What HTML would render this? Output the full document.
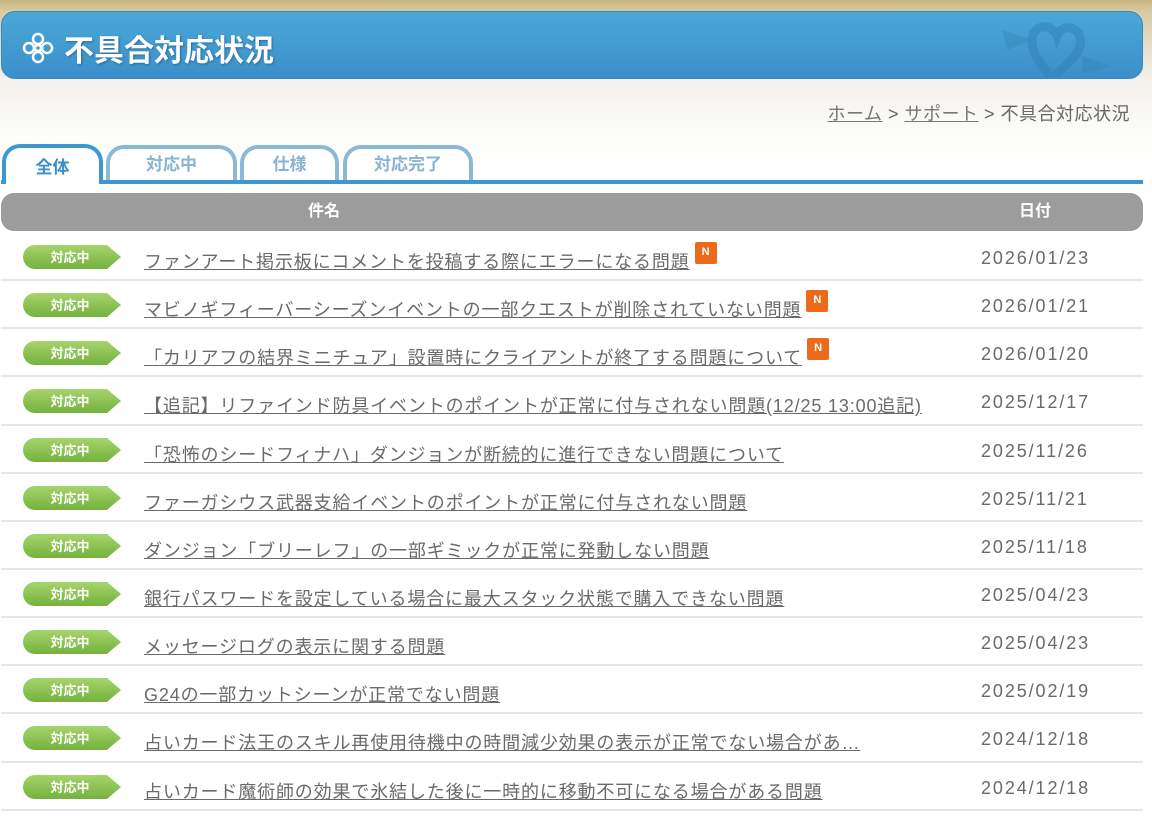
<!DOCTYPE html>
<html><head><meta charset="utf-8"><style>
*{margin:0;padding:0;box-sizing:border-box}
body{width:1152px;height:821px;overflow:hidden;background:#fff;font-family:"Liberation Sans","Noto Sans CJK JP",sans-serif;position:relative}
.bg{position:absolute;left:0;top:0;width:1152px;height:170px;background:linear-gradient(180deg,#c8b480 0,#d8caa4 12px,#f3f1ec 80px,#fbfbf9 130px,#fff 170px)}
.bar{position:absolute;left:1px;top:11px;width:1142px;height:68px;border-radius:14px;background:linear-gradient(180deg,#4aa8d8,#3b8fc9);border:1px solid #3a88bf;overflow:hidden}
.bar h1{position:absolute;left:62px;top:14px;color:#fff;font-size:30px;font-weight:bold;text-shadow:1px 1px 2px #2a6a99}
.knot{position:absolute;left:20px;top:20px;width:32px;height:32px}
.crumb{position:absolute;right:22px;top:100px;font-size:18px;color:#666;letter-spacing:.5px}
.crumb a{color:#777;text-decoration:underline}
.tab{position:absolute;top:145px;height:38px;border:4px solid #8ab9d8;border-bottom:none;border-radius:18px 18px 0 0;background:#fff;color:#8ab3d0;font-size:17px;font-weight:bold;text-align:center;line-height:32px}
.line{position:absolute;left:1px;top:180px;width:1142px;height:4px;background:#3e97cf}
.hdr{position:absolute;left:1px;top:193px;width:1142px;height:38px;background:#9c9c9c;border-radius:13px;color:#fff;font-size:16px;font-weight:bold;line-height:38px}
.rows{position:absolute;left:1px;top:233px;width:1142px}
.row{height:48.15px;border-bottom:2px solid #e6e6e6;position:relative;font-size:18px;color:#6a6a6a}
.badge{position:absolute;left:22px;top:12px;width:98px;height:24px}
.t{position:absolute;left:143px;top:15px;white-space:nowrap;color:#6a6a6a;letter-spacing:.85px}
.t u{text-decoration:underline}
.d{position:absolute;left:980px;top:15px;letter-spacing:1.9px;color:#6a6a6a}
.n{display:inline-block;width:22px;height:22px;background:#ec6a1c;border-radius:2px;color:#fff;font-size:11px;font-weight:bold;text-align:center;line-height:20px;vertical-align:top;margin-left:5px;margin-top:-6px;letter-spacing:0}
</style></head><body>
<div class="bg"></div>
<div class="bar">
<svg class="knot" viewBox="0 0 32 32" fill="none" stroke="#fff" stroke-width="2.5"><circle cx="16" cy="7" r="5"/><circle cx="16" cy="25" r="5"/><circle cx="7" cy="16" r="5"/><circle cx="25" cy="16" r="5"/><circle cx="16" cy="16" r="3"/></svg>
<h1>不具合対応状況</h1>
<svg style="position:absolute;left:1000px;top:4px" width="130" height="70" viewBox="0 0 130 70"><path d="M30 25 C30 8 50 6 55 20 C60 6 82 10 78 30 C74 44 58 52 50 64 C44 52 30 42 30 25Z" fill="none" stroke="#3284ba" stroke-width="9" opacity=".55"/><path d="M0 14 L30 24 L5 34Z M80 40 L110 50 L80 58Z" fill="#3284ba" opacity=".4"/></svg>
</div>
<div class="crumb"><a>ホーム</a> &gt; <a>サポート</a> &gt; 不具合対応状況</div>
<div class="tab" style="left:106px;width:131px">対応中</div>
<div class="tab" style="left:240px;width:99px">仕様</div>
<div class="tab" style="left:343px;width:130px">対応完了</div>
<div class="line"></div>
<div class="tab" style="left:2px;width:101px;color:#3a8fc6;border-color:#3e97cf;top:144px;height:40px;line-height:40px;z-index:2">全体</div>
<div class="hdr"><span style="position:absolute;left:307px">件名</span><span style="position:absolute;left:1018px">日付</span></div>
<div class="rows">
<svg width="0" height="0" style="position:absolute"><defs><linearGradient id="g" x1="0" y1="0" x2="0" y2="1"><stop offset="0" stop-color="#a6d46c"/><stop offset="1" stop-color="#74b23e"/></linearGradient></defs></svg>
<div class="row"><svg class="badge" viewBox="0 0 98 24"><path d="M12 0H84L98 12L84 24H12A12 12 0 0 1 12 0Z" fill="url(#g)"/><text x="47" y="17" font-size="13" fill="#fff" text-anchor="middle" font-weight="bold" font-family="Noto Sans CJK JP">対応中</text></svg><span class="t"><u>ファンアート掲示板にコメントを投稿する際にエラーになる問題</u><span class="n">N</span></span><span class="d">2026/01/23</span></div>
<div class="row"><svg class="badge" viewBox="0 0 98 24"><path d="M12 0H84L98 12L84 24H12A12 12 0 0 1 12 0Z" fill="url(#g)"/><text x="47" y="17" font-size="13" fill="#fff" text-anchor="middle" font-weight="bold" font-family="Noto Sans CJK JP">対応中</text></svg><span class="t"><u>マビノギフィーバーシーズンイベントの一部クエストが削除されていない問題</u><span class="n">N</span></span><span class="d">2026/01/21</span></div>
<div class="row"><svg class="badge" viewBox="0 0 98 24"><path d="M12 0H84L98 12L84 24H12A12 12 0 0 1 12 0Z" fill="url(#g)"/><text x="47" y="17" font-size="13" fill="#fff" text-anchor="middle" font-weight="bold" font-family="Noto Sans CJK JP">対応中</text></svg><span class="t"><u>「カリアフの結界ミニチュア」設置時にクライアントが終了する問題について</u><span class="n">N</span></span><span class="d">2026/01/20</span></div>
<div class="row"><svg class="badge" viewBox="0 0 98 24"><path d="M12 0H84L98 12L84 24H12A12 12 0 0 1 12 0Z" fill="url(#g)"/><text x="47" y="17" font-size="13" fill="#fff" text-anchor="middle" font-weight="bold" font-family="Noto Sans CJK JP">対応中</text></svg><span class="t"><u>【追記】リファインド防具イベントのポイントが正常に付与されない問題(12/25 13:00追記)</u></span><span class="d">2025/12/17</span></div>
<div class="row"><svg class="badge" viewBox="0 0 98 24"><path d="M12 0H84L98 12L84 24H12A12 12 0 0 1 12 0Z" fill="url(#g)"/><text x="47" y="17" font-size="13" fill="#fff" text-anchor="middle" font-weight="bold" font-family="Noto Sans CJK JP">対応中</text></svg><span class="t"><u>「恐怖のシードフィナハ」ダンジョンが断続的に進行できない問題について</u></span><span class="d">2025/11/26</span></div>
<div class="row"><svg class="badge" viewBox="0 0 98 24"><path d="M12 0H84L98 12L84 24H12A12 12 0 0 1 12 0Z" fill="url(#g)"/><text x="47" y="17" font-size="13" fill="#fff" text-anchor="middle" font-weight="bold" font-family="Noto Sans CJK JP">対応中</text></svg><span class="t"><u>ファーガシウス武器支給イベントのポイントが正常に付与されない問題</u></span><span class="d">2025/11/21</span></div>
<div class="row"><svg class="badge" viewBox="0 0 98 24"><path d="M12 0H84L98 12L84 24H12A12 12 0 0 1 12 0Z" fill="url(#g)"/><text x="47" y="17" font-size="13" fill="#fff" text-anchor="middle" font-weight="bold" font-family="Noto Sans CJK JP">対応中</text></svg><span class="t"><u>ダンジョン「ブリーレフ」の一部ギミックが正常に発動しない問題</u></span><span class="d">2025/11/18</span></div>
<div class="row"><svg class="badge" viewBox="0 0 98 24"><path d="M12 0H84L98 12L84 24H12A12 12 0 0 1 12 0Z" fill="url(#g)"/><text x="47" y="17" font-size="13" fill="#fff" text-anchor="middle" font-weight="bold" font-family="Noto Sans CJK JP">対応中</text></svg><span class="t"><u>銀行パスワードを設定している場合に最大スタック状態で購入できない問題</u></span><span class="d">2025/04/23</span></div>
<div class="row"><svg class="badge" viewBox="0 0 98 24"><path d="M12 0H84L98 12L84 24H12A12 12 0 0 1 12 0Z" fill="url(#g)"/><text x="47" y="17" font-size="13" fill="#fff" text-anchor="middle" font-weight="bold" font-family="Noto Sans CJK JP">対応中</text></svg><span class="t"><u>メッセージログの表示に関する問題</u></span><span class="d">2025/04/23</span></div>
<div class="row"><svg class="badge" viewBox="0 0 98 24"><path d="M12 0H84L98 12L84 24H12A12 12 0 0 1 12 0Z" fill="url(#g)"/><text x="47" y="17" font-size="13" fill="#fff" text-anchor="middle" font-weight="bold" font-family="Noto Sans CJK JP">対応中</text></svg><span class="t"><u>G24の一部カットシーンが正常でない問題</u></span><span class="d">2025/02/19</span></div>
<div class="row"><svg class="badge" viewBox="0 0 98 24"><path d="M12 0H84L98 12L84 24H12A12 12 0 0 1 12 0Z" fill="url(#g)"/><text x="47" y="17" font-size="13" fill="#fff" text-anchor="middle" font-weight="bold" font-family="Noto Sans CJK JP">対応中</text></svg><span class="t"><u>占いカード法王のスキル再使用待機中の時間減少効果の表示が正常でない場合があ…</u></span><span class="d">2024/12/18</span></div>
<div class="row"><svg class="badge" viewBox="0 0 98 24"><path d="M12 0H84L98 12L84 24H12A12 12 0 0 1 12 0Z" fill="url(#g)"/><text x="47" y="17" font-size="13" fill="#fff" text-anchor="middle" font-weight="bold" font-family="Noto Sans CJK JP">対応中</text></svg><span class="t"><u>占いカード魔術師の効果で氷結した後に一時的に移動不可になる場合がある問題</u></span><span class="d">2024/12/18</span></div>
</div>
</body></html>
